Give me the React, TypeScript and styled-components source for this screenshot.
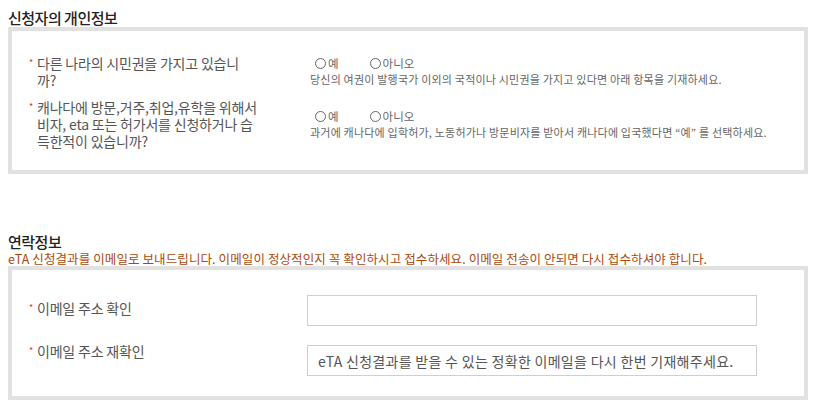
import React from "react";
import styled, { createGlobalStyle } from "styled-components";

const GlobalStyle = createGlobalStyle`
  body {
    margin: 8px;
    background: #ffffff;
    font-family: "Noto Sans CJK KR", "Noto Sans", sans-serif;
  }
`;

const Page = styled.div`
  width: 800px;
`;

const SectionTitle = styled.h2<{ $top?: number }>`
  margin: ${(p) => p.$top || 0}px 0 0 0;
  height: 19px;
  font-size: 15px;
  font-weight: 500;
  letter-spacing: -0.5px;
  line-height: 19px;
  color: #222;
`;

const Notice = styled.p`
  margin: 0;
  height: 15px;
  font-size: 12.5px;
  line-height: 15px;
  letter-spacing: 0.1px;
  color: #a94a0c;
`;

const Panel = styled.div<{ $pt: number; $pb: number }>`
  border: 4px solid #e1e1e1;
  padding: ${(p) => p.$pt}px 0 ${(p) => p.$pb}px 17px;
  display: flex;
  flex-direction: column;
`;

const Row = styled.div<{ $gap?: number }>`
  display: flex;
  align-items: flex-start;
  margin-top: ${(p) => p.$gap || 0}px;
`;

const Label = styled.div<{ $dy?: number; $w: number }>`
  width: ${(p) => p.$w}px;
  flex: none;
  display: flex;
  align-items: flex-start;
  margin-top: ${(p) => p.$dy || 0}px;
  font-size: 14px;
  line-height: 17px;
  letter-spacing: -0.2px;
  color: #555;
`;

const Star = styled.span`
  width: 8px;
  flex: none;
  color: #e53030;
  font-size: 9px;
  line-height: 15px;
`;

const LabelText = styled.span`
  white-space: nowrap;
`;

const Answer = styled.div<{ $pt?: number }>`
  display: flex;
  flex-direction: column;
  padding-top: ${(p) => p.$pt || 0}px;
`;

const RadioLine = styled.div`
  display: flex;
  gap: 31px;
  padding-left: 5px;
`;

const RadioItem = styled.label`
  display: flex;
  align-items: center;
  gap: 2px;
  font-size: 11.5px;
  line-height: 16px;
  color: #666;
`;

const Circle = styled.span`
  width: 11px;
  height: 11px;
  border: 1px solid #666;
  border-radius: 50%;
  box-sizing: border-box;
`;

const Help = styled.div`
  font-size: 11px;
  line-height: 16px;
  letter-spacing: 0.2px;
  color: #666;
  white-space: nowrap;
`;

const Input = styled.input`
  width: 450px;
  height: 31px;
  box-sizing: border-box;
  border: 1px solid #cfcfcf;
  padding: 0 10px;
  font-family: "Noto Sans CJK KR", "Noto Sans", sans-serif;
  font-size: 14px;
  letter-spacing: 0.3px;
  color: #555;
  outline: none;
  &::placeholder {
    color: #555;
  }
`;

const Radio = ({ text }: { text: string }) => (
  <RadioItem>
    <Circle />
    {text}
  </RadioItem>
);

export default function App() {
  return (
    <Page>
      <GlobalStyle />
      <SectionTitle>신청자의 개인정보</SectionTitle>
      <Panel $pt={24} $pb={20}>
        <Row>
          <Label $w={281}>
            <Star>*</Star>
            <LabelText>
              다른 나라의 시민권을 가지고 있습니
              <br />
              까?
            </LabelText>
          </Label>
          <Answer>
            <RadioLine>
              <Radio text="예" />
              <Radio text="아니오" />
            </RadioLine>
            <Help>당신의 여권이 발행국가 이외의 국적이나 시민권을 가지고 있다면 아래 항목을 기재하세요.</Help>
          </Answer>
        </Row>
        <Row $gap={10}>
          <Label $w={281}>
            <Star>*</Star>
            <LabelText>
              캐나다에 방문,거주,취업,유학을 위해서
              <br />
              비자, eta 또는 허가서를 신청하거나 습
              <br />
              득한적이 있습니까?
            </LabelText>
          </Label>
          <Answer $pt={9}>
            <RadioLine>
              <Radio text="예" />
              <Radio text="아니오" />
            </RadioLine>
            <Help>과거에 캐나다에 입학허가, 노동허가나 방문비자를 받아서 캐나다에 입국했다면 “예” 를 선택하세요.</Help>
          </Answer>
        </Row>
      </Panel>
      <SectionTitle $top={58}>연락정보</SectionTitle>
      <Notice>eTA 신청결과를 이메일로 보내드립니다. 이메일이 정상적인지 꼭 확인하시고 접수하세요. 이메일 전송이 안되면 다시 접수하셔야 합니다.</Notice>
      <Panel $pt={25} $pb={20}>
        <Row>
          <Label $w={278} $dy={5}>
            <Star>*</Star>
            <LabelText>이메일 주소 확인</LabelText>
          </Label>
          <Input type="text" />
        </Row>
        <Row $gap={19}>
          <Label $w={278} $dy={-2}>
            <Star>*</Star>
            <LabelText>이메일 주소 재확인</LabelText>
          </Label>
          <Input type="text" placeholder="eTA 신청결과를 받을 수 있는 정확한 이메일을 다시 한번 기재해주세요." />
        </Row>
      </Panel>
    </Page>
  );
}
